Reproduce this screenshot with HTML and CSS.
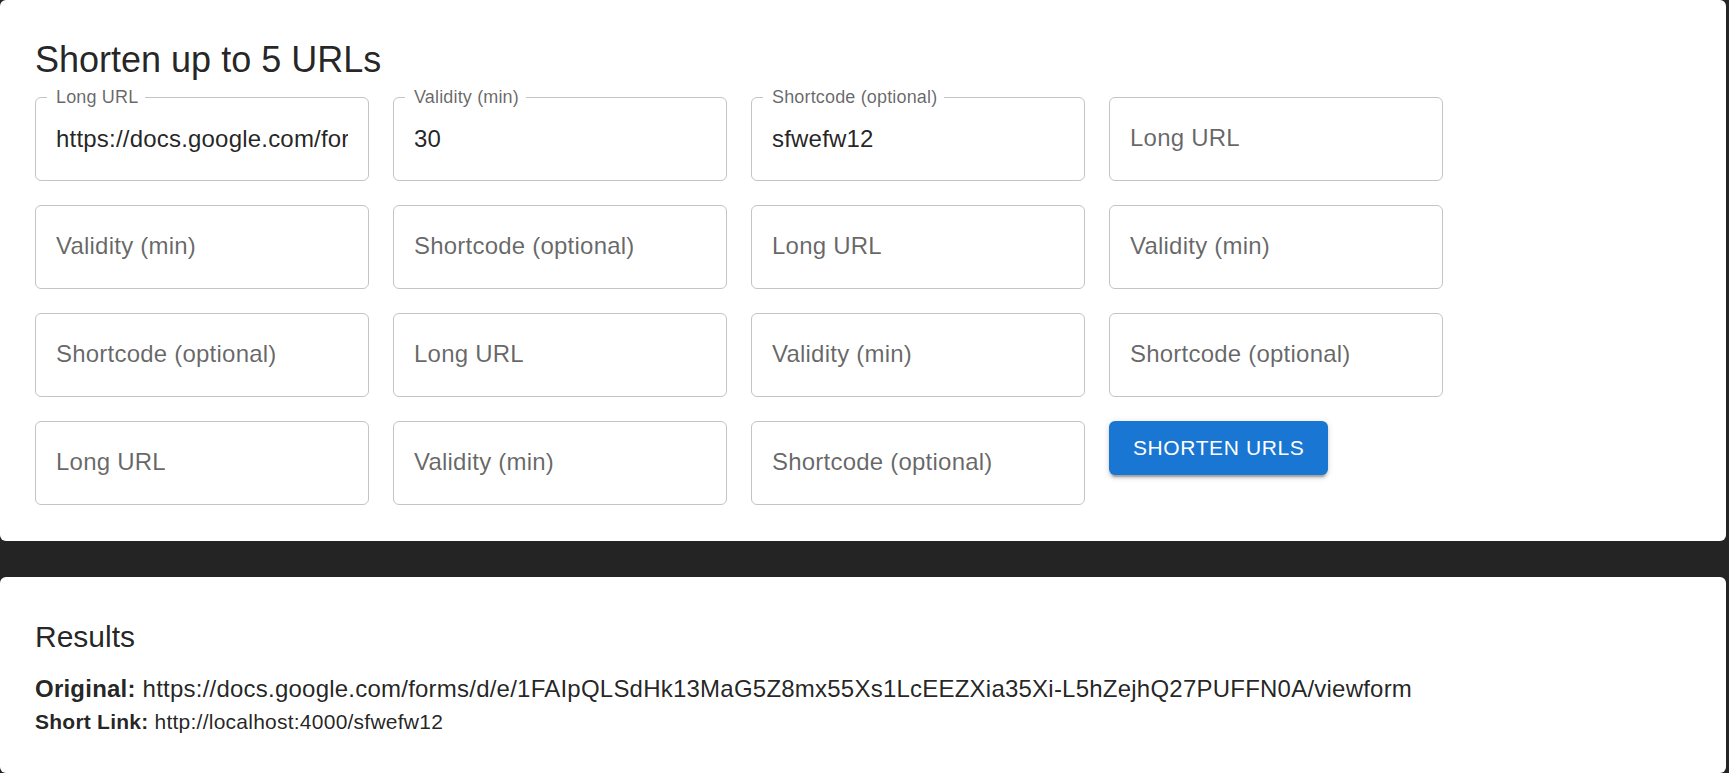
FILE: index.html
```html
<!DOCTYPE html>
<html lang="en">
<head>
<meta charset="utf-8">
<title>URL Shortener</title>
<link rel="stylesheet" href="styles.css">
</head>
<body>
<div class="page">
  <section class="card">
    <h1 class="title">Shorten up to 5 URLs</h1>
    <form class="grid">
      <div class="field filled">
        <label class="label shrink">Long URL</label>
        <input class="input" type="text" value="https://docs.google.com/forms/d/e/1FAIpQLSdHk13MaG5Z8mx55Xs1LcEEZXia35Xi-L5hZejhQ27PUFFN0A/viewform">
      </div>
      <div class="field filled">
        <label class="label shrink">Validity (min)</label>
        <input class="input" type="text" value="30">
      </div>
      <div class="field filled">
        <label class="label shrink">Shortcode (optional)</label>
        <input class="input" type="text" value="sfwefw12">
      </div>
      <div class="field"><label class="label">Long URL</label><input class="input" type="text"></div>
      <div class="field"><label class="label">Validity (min)</label><input class="input" type="text"></div>
      <div class="field"><label class="label">Shortcode (optional)</label><input class="input" type="text"></div>
      <div class="field"><label class="label">Long URL</label><input class="input" type="text"></div>
      <div class="field"><label class="label">Validity (min)</label><input class="input" type="text"></div>
      <div class="field"><label class="label">Shortcode (optional)</label><input class="input" type="text"></div>
      <div class="field"><label class="label">Long URL</label><input class="input" type="text"></div>
      <div class="field"><label class="label">Validity (min)</label><input class="input" type="text"></div>
      <div class="field"><label class="label">Shortcode (optional)</label><input class="input" type="text"></div>
      <div class="field"><label class="label">Long URL</label><input class="input" type="text"></div>
      <div class="field"><label class="label">Validity (min)</label><input class="input" type="text"></div>
      <div class="field"><label class="label">Shortcode (optional)</label><input class="input" type="text"></div>
      <div class="btn-cell"><button type="button" class="btn">Shorten URLs</button></div>
    </form>
  </section>
  <section class="card results">
    <h2 class="subtitle">Results</h2>
    <p class="orig"><strong>Original:</strong> https://docs.google.com/forms/d/e/1FAIpQLSdHk13MaG5Z8mx55Xs1LcEEZXia35Xi-L5hZejhQ27PUFFN0A/viewform</p>
    <p class="short"><strong>Short Link:</strong> http://localhost:4000/sfwefw12</p>
  </section>
</div>
</body>
</html>
```

FILE: styles.css
```css
html, body {
  margin: 0;
  padding: 0;
}
body {
  background: #242424;
  font-family: "Liberation Sans", Arial, Helvetica, sans-serif;
  color: rgba(0, 0, 0, 0.87);
  overflow: hidden;
}
.page {
  display: flex;
  flex-direction: column;
  gap: 36px;
  padding-right: 3px;
}
.card {
  background: #fff;
  border-radius: 6px;
  padding: 36px 36px 36px 35px;
}
.title {
  margin: 0 0 12.6px;
  font-size: 36px;
  font-weight: 400;
  line-height: 48px;
}
.grid {
  display: grid;
  grid-template-columns: repeat(4, 334px);
  gap: 24px;
  margin: 0;
}
.field {
  position: relative;
  height: 84px;
  border: 1px solid #c4c4c4;
  border-radius: 6px;
  box-sizing: border-box;
}
.input {
  display: block;
  box-sizing: border-box;
  width: 100%;
  height: 82px;
  border: 0;
  outline: 0;
  background: transparent;
  padding: 0 20px;
  font-family: inherit;
  font-size: 24px;
  letter-spacing: 0.2px;
  color: rgba(0, 0, 0, 0.87);
}
.label {
  position: absolute;
  left: 20px;
  top: 23.75px;
  font-size: 24px;
  letter-spacing: 0.22px;
  line-height: 34.5px;
  color: rgba(0, 0, 0, 0.6);
  pointer-events: none;
  white-space: nowrap;
}
.label.shrink {
  left: 11px;
  top: -14px;
  font-size: 18px;
  letter-spacing: 0.16px;
  line-height: 26px;
  padding: 0 7px 0 9px;
  background: #fff;
}
.btn-cell {
  display: flex;
  align-items: flex-start;
}
.btn {
  font-family: inherit;
  font-size: 21px;
  font-weight: 500;
  letter-spacing: 0.6px;
  text-transform: uppercase;
  line-height: 36.75px;
  padding: 9px 24px;
  color: #fff;
  background: #1976d2;
  border: 0;
  border-radius: 6px;
  box-shadow: 0 4.5px 1.5px -3px rgba(0,0,0,0.2), 0 3px 3px 0 rgba(0,0,0,0.14), 0 1.5px 7.5px 0 rgba(0,0,0,0.12);
  cursor: pointer;
}
.subtitle {
  margin: 0 0 10.5px;
  font-size: 30px;
  font-weight: 400;
  line-height: 48px;
}
.orig {
  margin: 0;
  font-size: 24px;
  letter-spacing: 0.225px;
  line-height: 36px;
}
.short {
  margin: 0;
  font-size: 21px;
  letter-spacing: 0.24px;
  line-height: 30px;
}
```
